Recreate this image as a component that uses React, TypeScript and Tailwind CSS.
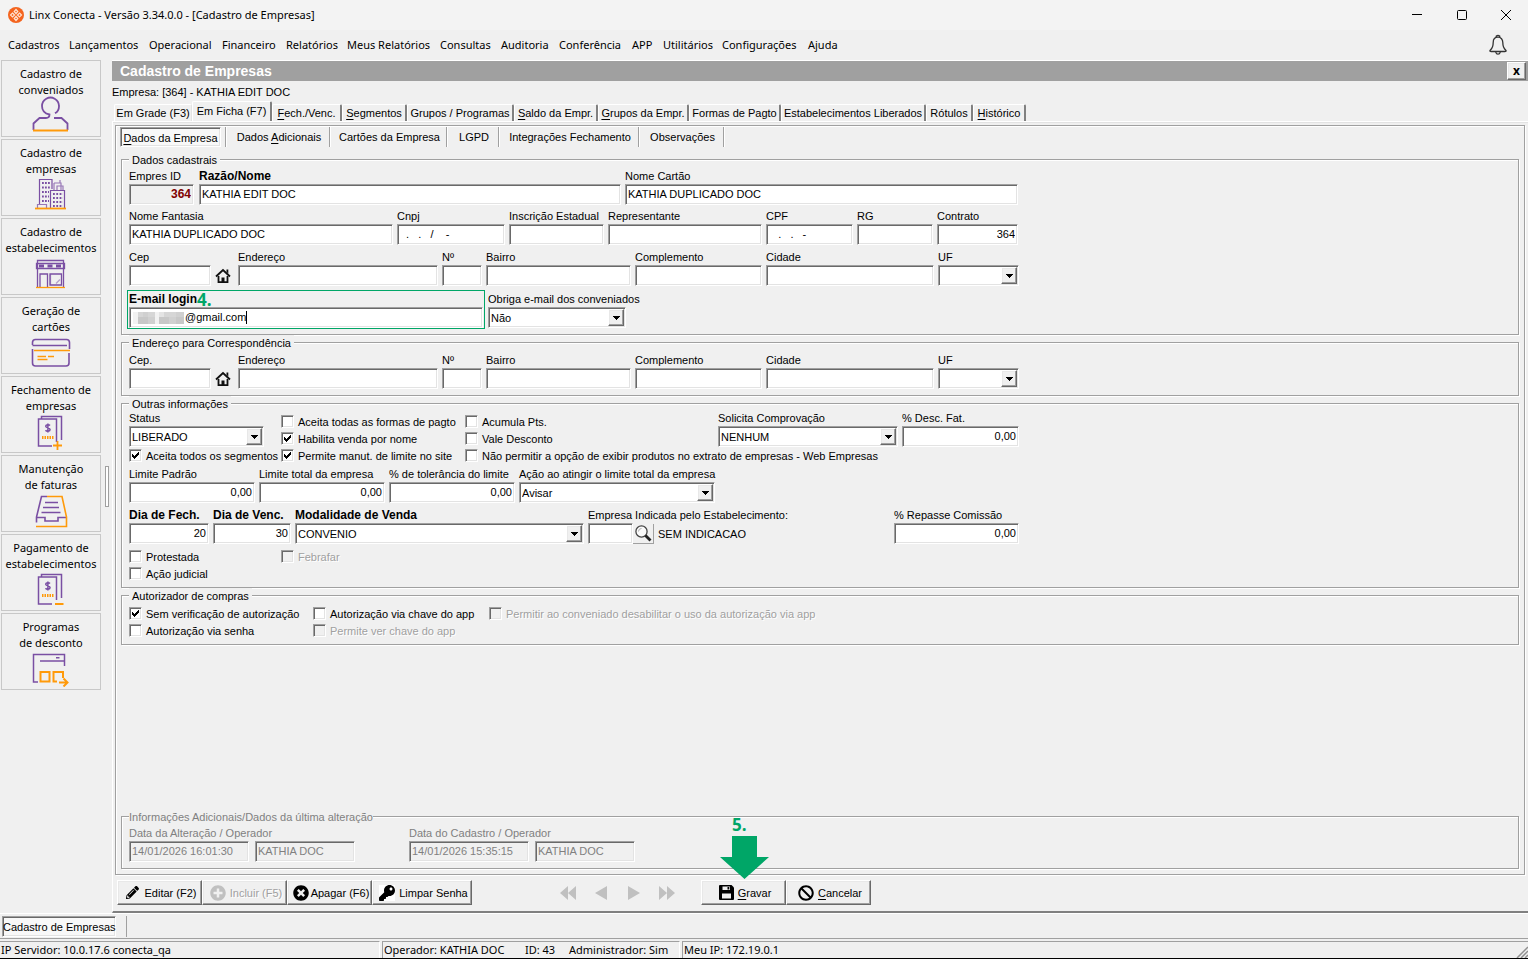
import React, { useId } from "react";
import { FaPencilAlt, FaPlusCircle, FaTimesCircle, FaKey, FaBan } from "react-icons/fa";

const sunken =
  "border border-t-[#a0a0a0] border-l-[#a0a0a0] border-b-white border-r-white shadow-[inset_1px_1px_0_#696969,inset_-1px_-1px_0_#e3e3e3]";
const raised =
  "border border-t-white border-l-white border-b-[#696969] border-r-[#696969] shadow-[inset_-1px_-1px_0_#a0a0a0,inset_1px_1px_0_#e8e8e8]";

const PURPLE = "#7a4fa3";
const ORANGE = "#ff9a0a";

/* ---------- form pieces ---------- */

type FieldProps = {
  label: string;
  w: string;
  value?: string;
  right?: boolean;
  bold?: boolean;
  disabled?: boolean;
  inputClass?: string;
};

function FieldLabel({ id, bold, children }: { id: string; bold?: boolean; children: React.ReactNode }) {
  return (
    <label
      htmlFor={id}
      className={`block h-[15px] whitespace-nowrap leading-[14px] ${bold ? "text-[12px] font-bold" : ""}`}
    >
      {children}
    </label>
  );
}

function Field({ label, w, value = "", right, bold, disabled, inputClass = "bg-white" }: FieldProps) {
  const id = useId();
  return (
    <div className={`shrink-0 ${w}`}>
      <FieldLabel id={id} bold={bold}>
        {label}
      </FieldLabel>
      <input
        id={id}
        type="text"
        defaultValue={value}
        disabled={disabled}
        className={`block h-[21px] w-full px-[2px] pb-px outline-none ${sunken} ${right ? "text-right" : ""} ${inputClass}`}
      />
    </div>
  );
}

function SelectField({ label, w, value = "", bold }: FieldProps) {
  const id = useId();
  return (
    <div className={`shrink-0 ${w}`}>
      <FieldLabel id={id} bold={bold}>
        {label}
      </FieldLabel>
      <div className="relative">
        <select
          id={id}
          defaultValue={value}
          className={`block h-[21px] w-full appearance-none bg-white pl-[2px] pr-5 outline-none ${sunken}`}
        >
          <option value={value}>{value}</option>
        </select>
        <span
          className={`pointer-events-none absolute inset-y-[2px] right-[2px] flex w-4 items-center justify-center bg-[#f0f0f0] ${raised}`}
        >
          <svg width="7" height="4" viewBox="0 0 7 4" shapeRendering="crispEdges">
            <path d="M0 0h7v1h-1v1h-1v1h-1v1h-1v-1h-1v-1h-1v-1h-1z" fill="#000" />
          </svg>
        </span>
      </div>
    </div>
  );
}

function Check({
  label,
  checked,
  disabled,
  w = "",
}: {
  label: string;
  checked?: boolean;
  disabled?: boolean;
  w?: string;
}) {
  return (
    <label className={`flex h-[17px] shrink-0 items-center gap-1 whitespace-nowrap ${w}`}>
      <span className="grid place-items-center">
        <input
          type="checkbox"
          defaultChecked={checked}
          disabled={disabled}
          className={`peer col-start-1 row-start-1 size-[13px] appearance-none bg-white disabled:bg-[#f0f0f0] ${sunken}`}
        />
        <svg
          className="pointer-events-none invisible col-start-1 row-start-1 peer-checked:visible"
          width="7"
          height="7"
          viewBox="0 0 7 7"
          shapeRendering="crispEdges"
        >
          <path d="M0 2h1v1h1v1h1v-1h1v-1h1v-1h1v-1h1v3h-1v1h-1v1h-1v1h-1v1h-1v-1h-1v-1h-1z" fill="#000" />
        </svg>
      </span>
      <span className={disabled ? "text-[#a0a0a0] [text-shadow:1px_1px_0_#fff]" : ""}>{label}</span>
    </label>
  );
}

function Group({
  title,
  className,
  legendClass = "px-[3px]",
  children,
}: {
  title: string;
  className: string;
  legendClass?: string;
  children: React.ReactNode;
}) {
  return (
    <fieldset
      className={`min-w-0 border border-[#a0a0a0] pl-[7px] shadow-[1px_1px_0_#fff,inset_1px_1px_0_#fff] ${className}`}
    >
      <legend className={`bg-[#f0f0f0] pt-[2px] leading-[13px] ${legendClass}`}>{title}</legend>
      {children}
    </fieldset>
  );
}

function HomeIcon() {
  return (
    <button type="button" aria-label="Buscar CEP" className="flex h-[21px] w-6 shrink-0 items-center justify-center">
      <svg width="16" height="16" viewBox="0 0 16 16">
        <path d="M1 8.500 8 2l7 6.500" fill="none" stroke="#111" strokeWidth="1.800" />
        <path d="M3.500 8v6.200h9V8" fill="none" stroke="#111" strokeWidth="1.800" />
        <path d="M11.500 1.500h1.800v4l-1.800-1.600z" fill="#111" />
        <path d="M6.500 9.500h3v5h-3z" fill="#111" />
      </svg>
    </button>
  );
}

function AddressRow({ cep }: { cep: string }) {
  return (
    <div className="flex items-end">
      <Field label={cep} w="w-[82px]" />
      <HomeIcon />
      <div className="ml-[3px] flex gap-1">
        <Field label="Endereço" w="w-[200px]" />
        <Field label="Nº" w="w-[40px]" />
        <Field label="Bairro" w="w-[145px]" />
        <Field label="Complemento" w="w-[127px]" />
        <Field label="Cidade" w="w-[168px]" />
        <SelectField label="UF" w="w-[81px]" />
      </div>
    </div>
  );
}

/* ---------- sidebar ---------- */

function Invoice({ sign }: { sign: "plus" | "minus" }) {
  return (
    <g fill="none" strokeWidth="1.500">
      <path d="M11.500 7V4.500H31.500V28" stroke={PURPLE} />
      <path d="M22 34H8.500V7H26.500V30" stroke={PURPLE} />
      <path d="M20 13.500c-1-1.200-4.300-1-4.300.8 0 2 4.400 1.200 4.400 3.300 0 2-3.500 2.100-4.600.7M17.900 11.500v9" stroke={PURPLE} />
      <path d="M12 25.500h12" stroke={ORANGE} strokeWidth="3" strokeDasharray="1.500 1" />
      {sign === "plus" ? (
        <path d="M23 33.500h9M27.500 29v9" stroke={ORANGE} strokeWidth="1.800" />
      ) : (
        <path d="M25 34h8.500" stroke={ORANGE} strokeWidth="2" />
      )}
    </g>
  );
}

const icons: Record<string, React.ReactNode> = {
  user: (
    <g fill="none" stroke={PURPLE} strokeWidth="1.800">
      <path d="M3.500 34v-6.500L9.500 22H16q3.500 0 3.500-3.500Q12 17 12 10a8.500 8.500 0 1 1 13 7.300" />
      <path d="M24 22h7.500l6 5.500V34" />
      <path d="M3 34.500h35" stroke={ORANGE} />
    </g>
  ),
  buildings: (
    <g fill="none" stroke={PURPLE} strokeWidth="1.200">
      <path d="M9.500 29V4.500H22V14M20.500 33V15.500H34.500V33" />
      <path d="M24 8h7v7M30 5v3M24 8v7M7.500 33v-3.500h9V33M27 15v-4h6v4" opacity=".75" />
      <path d="M12 8h8M12 12.500h8M12 17h7M12 21.500h7M12 26h7" strokeWidth="1.800" strokeDasharray="1.800 1.200" />
      <path d="M23 19h10M23 23h10M23 27h10M23 31h10" strokeWidth="1.800" strokeDasharray="1.800 1.500" />
      <path d="M5 33.500h31" stroke={ORANGE} strokeWidth="1.800" />
    </g>
  ),
  store: (
    <g fill="none" stroke={PURPLE} strokeWidth="1.300">
      <path d="M7.500 33V6.500h26V33M6.500 14.500h28v-5h-28zM10 33V20h7.500v13M20 20h11.500v11H20z" />
      <path d="M9 12h24" strokeWidth="3" strokeDasharray="5 3.500" />
      <path d="M20.500 20v11M26 29.500l4-4" opacity=".5" />
      <path d="M6 33.500h29" stroke={ORANGE} />
    </g>
  ),
  card: (
    <g fill="none" stroke={PURPLE} strokeWidth="1.600">
      <path d="M2.500 12V9.500q0-3 3-3h31q3 0 3 3V16M2.500 12.500H37M2.500 16v14q0 3 3 3h30.500q3 0 3-3V20" />
      <path d="M4 17.500h36M7.500 23.500h8.500M18 23.500h6M7.500 26.500h10" stroke={ORANGE} />
    </g>
  ),
  invoicePlus: <Invoice sign="plus" />,
  tray: (
    <g fill="none" stroke={PURPLE} strokeWidth="1.600">
      <path d="M17 5.500h-5.500L6.500 26v5.500M15 11.500h13M13 16.500h16M11.500 21.500h19M6 26.500h9V30h13v-3.500h8" />
      <path d="M17 5.500h15L36.500 26v9.500H6" stroke={ORANGE} />
    </g>
  ),
  invoiceMinus: <Invoice sign="minus" />,
  programs: (
    <g fill="none" stroke={PURPLE} strokeWidth="1.500">
      <path d="M34.500 17V5.500H3.500V33H8M10 12h24.500M26 8.700h3.500" />
      <g stroke={ORANGE} strokeWidth="2">
        <path d="M10.500 23h9v9.500h-9zM27 32.500h-3.500V23h9.500v6M29 33.500h8M33.500 29.500l4 4-4 4" />
      </g>
    </g>
  ),
};

const sideItems: [string, string, string][] = [
  ["Cadastro de", "conveniados", "user"],
  ["Cadastro de", "empresas", "buildings"],
  ["Cadastro de", "estabelecimentos", "store"],
  ["Geração de", "cartões", "card"],
  ["Fechamento de", "empresas", "invoicePlus"],
  ["Manutenção", "de faturas", "tray"],
  ["Pagamento de", "estabelecimentos", "invoiceMinus"],
  ["Programas", "de desconto", "programs"],
];

function Sidebar() {
  return (
    <nav className="flex w-[101px] shrink-0 flex-col gap-[2px] pl-px">
      {sideItems.map(([a, b, icon]) => (
        <button
          key={a + b}
          type="button"
          className="flex h-[77px] flex-col items-center border border-[#c8c8c8] pt-[5px] font-['Noto_Sans',sans-serif] text-[11px] leading-4"
        >
          <span>{a}</span>
          <span>{b}</span>
          <svg width="42" height="38" viewBox="0 0 42 38" className="-mt-0.5 shrink-0">
            {icons[icon]}
          </svg>
        </button>
      ))}
    </nav>
  );
}

/* ---------- bars ---------- */

const menu: [string, string][] = [
  ["Cadastros", "w-[61px]"],
  ["Lançamentos", "w-[80px]"],
  ["Operacional", "w-[73px]"],
  ["Financeiro", "w-[64px]"],
  ["Relatórios", "w-[61px]"],
  ["Meus Relatórios", "w-[93px]"],
  ["Consultas", "w-[61px]"],
  ["Auditoria", "w-[58px]"],
  ["Conferência", "w-[73px]"],
  ["APP", "w-[31px]"],
  ["Utilitários", "w-[59px]"],
  ["Configurações", "w-[86px]"],
  ["Ajuda", "w-[40px]"],
];

function TitleBar() {
  return (
    <header className="flex h-[30px] items-center bg-[#f3f3f3] pl-2 font-['Noto_Sans',sans-serif] text-[11px]">
      <svg width="16" height="16" viewBox="0 0 16 16">
        <circle cx="8" cy="8" r="8" fill="#f4641e" />
        <g fill="none" stroke="#ffe3d2" strokeWidth="1.200">
          <path d="M8 2.500 9.800 4.500 8 6.500 6.200 4.500zM8 9.500l1.800 2L8 13.500l-1.800-2zM4.500 6l2 2-2 2-2-2zM11.500 6l2 2-2 2-2-2z" />
        </g>
      </svg>
      <h1 className="ml-[5px] whitespace-nowrap">Linx Conecta - Versão 3.34.0.0 - [Cadastro de Empresas]</h1>
      <div className="ml-auto flex h-full">
        <button type="button" aria-label="Minimizar" className="flex w-[45px] items-center justify-center">
          <svg width="10" height="10" viewBox="0 0 10 10" shapeRendering="crispEdges">
            <path d="M0 4h10v1H0z" />
          </svg>
        </button>
        <button type="button" aria-label="Maximizar" className="flex w-[45px] items-center justify-center">
          <svg width="10" height="10" viewBox="0 0 10 10">
            <rect x=".5" y=".5" width="9" height="9" rx="1" fill="none" stroke="#000" />
          </svg>
        </button>
        <button type="button" aria-label="Fechar" className="flex w-[44px] items-center justify-center">
          <svg width="10" height="10" viewBox="0 0 10 10">
            <path d="M0 0l10 10M10 0L0 10" stroke="#000" />
          </svg>
        </button>
      </div>
    </header>
  );
}

function MenuBar() {
  return (
    <div className="flex h-[30px] items-center pl-2 font-['Noto_Sans',sans-serif] text-[11px]">
      {menu.map(([t, w]) => (
        <button key={t} type="button" className={`shrink-0 whitespace-nowrap text-left ${w}`}>
          {t}
        </button>
      ))}
      <button type="button" aria-label="Notificações" className="ml-auto mr-5">
        <svg width="20" height="22" viewBox="0 0 20 22" fill="none" stroke="#333" strokeWidth="1.300">
          <path d="M10 3.200C7 3.200 5.200 5.500 5.200 8.500c0 4.500-1 6-3 7.700-.8.900 0 1.300 1 1.300h13.600c1 0 1.800-.4 1-1.300-2-1.700-3-3.200-3-7.700 0-3-1.800-5.300-4.800-5.300z" />
          <path d="M8.300 3.200V2q1.700-1 3.400 0v1.200M7.900 17.500v1q.3 1.700 2.100 1.700t2.100-1.700v-1" />
        </svg>
      </button>
    </div>
  );
}

/* Renders a caption, underlining its shortcut letter. */
function Hot({ text }: { text: string }) {
  const i = text.indexOf("&");
  if (i < 0) return <span>{text}</span>;
  return (
    <span>
      {text.slice(0, i)}
      <u className="underline-offset-2">{text[i + 1]}</u>
      {text.slice(i + 2)}
    </span>
  );
}

const tabs: [string, string][] = [
  ["Em Grade (F3)", "w-[78px]"],
  ["Em Ficha (F7)", "w-[80px]"],
  ["&Fech./Venc.", "w-[70px]"],
  ["&Segmentos", "w-[65px]"],
  ["Grupos / Programas", "w-[107px]"],
  ["&Saldo da Empr.", "w-[84px]"],
  ["&Grupos da Empr.", "w-[91px]"],
  ["Formas de Pagto", "w-[92px]"],
  ["Estabelecimentos Liberados", "w-[145px]"],
  ["Rótulos", "w-[47px]"],
  ["&Histórico", "w-[53px]"],
];

function OuterTabs() {
  return (
    <div role="tablist" className="flex h-[19px] items-end pl-[2px]">
      {tabs.map(([t, w], i) => (
        <button
          key={t}
          role="tab"
          aria-selected={i === 1}
          type="button"
          className={`flex shrink-0 justify-center whitespace-nowrap rounded-t-[2px] border-l border-t border-white ${w} ${
            i === 1 ? "h-[20px] pt-[2px]" : "h-[17px] pt-px"
          } ${i === 0 ? "border-r border-r-[#e3e3e3]" : "border-r-2 border-r-[#808080]"} leading-[14px]`}
        >
          <Hot text={t} />
        </button>
      ))}
    </div>
  );
}

const innerTabs: [string, string][] = [
  ["Dados &Adicionais", "w-[104px]"],
  ["Cartões da Empresa", "w-[117px]"],
  ["LGPD", "w-[52px]"],
  ["Integrações Fechamento", "w-[140px]"],
  ["Observações", "w-[85px]"],
];

function InnerTabs() {
  return (
    <div role="tablist" className="flex h-[21px] pl-1 pt-px">
      <button
        role="tab"
        aria-selected
        type="button"
        className={`mr-1 w-[101px] shrink-0 whitespace-nowrap bg-[#f8f8f8] pt-[2px] ${sunken}`}
      >
        <Hot text="&Dados da Empresa" />
      </button>
      <span className="w-px shrink-0 bg-[#a0a0a0]" />
      {innerTabs.map(([t, w]) => (
        <button
          key={t}
          role="tab"
          type="button"
          className={`shrink-0 whitespace-nowrap border-r border-[#a0a0a0] pl-[3px] shadow-[1px_0_0_#fff,inset_1px_0_0_#fff] ${w}`}
        >
          <Hot text={t} />
        </button>
      ))}
    </div>
  );
}

/* ---------- groups ---------- */

function DadosCadastrais() {
  const emailId = useId();
  return (
    <Group title="Dados cadastrais" className="pb-[5px] pt-[2px]">
      <div className="flex">
        <Field
          label="Empres ID"
          w="w-[65px]"
          value="364"
          right
          inputClass="bg-[#f0f0f0] text-[12px] font-bold text-[#800000]"
        />
        <div className="ml-[5px] flex gap-1">
          <Field label="Razão/Nome" w="w-[422px]" value="KATHIA EDIT DOC" bold />
          <Field label="Nome Cartão" w="w-[393px]" value="KATHIA DUPLICADO DOC" />
        </div>
      </div>
      <div className="mt-1 flex gap-1">
        <Field label="Nome Fantasia" w="w-[264px]" value="KATHIA DUPLICADO DOC" />
        <Field label="Cnpj" w="w-[108px]" value={"  .   .   /    -"} inputClass="bg-white whitespace-pre" />
        <Field label="Inscrição Estadual" w="w-[95px]" />
        <Field label="Representante" w="w-[154px]" />
        <Field label="CPF" w="w-[87px]" value={"   .   .   -"} inputClass="bg-white whitespace-pre" />
        <Field label="RG" w="w-[76px]" />
        <Field label="Contrato" w="w-[81px]" value="364" right />
      </div>
      <div className="mt-[5px]">
        <AddressRow cep="Cep" />
      </div>
      <div className="mt-1 flex items-end gap-[3px]">
        <div className="relative -ml-[2px] w-[358px] shrink-0 border border-[#00a667] px-px pt-px">
          <FieldLabel id={emailId} bold>
            E-mail login
          </FieldLabel>
          <input
            id={emailId}
            type="email"
            defaultValue="@gmail.com"
            className={`block h-[21px] w-full bg-white pb-px pl-[55px] outline-none ${sunken}`}
          />
          <span className="absolute left-[69px] top-0 font-['Open_Sans',sans-serif] text-[17px] font-bold leading-[18px] text-[#00a667]">
            4.
          </span>
          <svg
            className="absolute bottom-[4px] left-[5px]"
            width="53"
            height="12"
            viewBox="0 0 53 12"
            shapeRendering="crispEdges"
            aria-hidden="true"
          >
            <path d="M0 0h5v12H0zM22 0h4v12h-4z" fill="#f2f2f2" />
            <path d="M5 0h5v5H5zM15 0h7v5h-7zM31 0h12v5H31z" fill="#d6d6d6" />
            <path d="M5 5h10v7H5zM26 5h10v7H26zM43 5h8v7h-8z" fill="#c8c8c8" />
            <path d="M15 5h7v7h-7zM36 5h7v7h-7zM10 0h5v5h-5zM43 0h8v5h-8z" fill="#d0d0d0" />
            <path d="M26 0h5v5h-5z" fill="#e4e4e4" />
          </svg>
          <span className="absolute bottom-[4px] left-[118px] h-[13px] w-px bg-black" />
        </div>
        <div className="pb-px">
          <SelectField label="Obriga e-mail dos conveniados" w="w-[138px]" value="Não" />
        </div>
      </div>
    </Group>
  );
}

function OutrasInformacoes() {
  const id = useId();
  return (
    <Group title="Outras informações" className="pb-[5px] pt-0">
      <div className="flex">
        <div className="w-[152px] shrink-0">
          <SelectField label="Status" w="w-[135px]" value="LIBERADO" />
          <Check label="Aceita todos os segmentos" checked />
        </div>
        <div className="w-[184px] shrink-0 pt-[2px]">
          <Check label="Aceita todas as formas de pagto" />
          <Check label="Habilita venda por nome" checked />
          <Check label="Permite manut. de limite no site" checked />
        </div>
        <div className="w-[253px] shrink-0 pt-[2px]">
          <Check label="Acumula Pts." />
          <Check label="Vale Desconto" />
          <Check label="Não permitir a opção de exibir produtos no extrato de empresas - Web Empresas" />
        </div>
        <div className="flex gap-1">
          <SelectField label="Solicita Comprovação" w="w-[180px]" value="NENHUM" />
          <Field label="% Desc. Fat." w="w-[117px]" value="0,00" right />
        </div>
      </div>
      <div className="mt-[3px] flex gap-1">
        <Field label="Limite Padrão" w="w-[126px]" value="0,00" right />
        <Field label="Limite total da empresa" w="w-[126px]" value="0,00" right />
        <Field label="% de tolerância do limite" w="w-[126px]" value="0,00" right />
        <SelectField label="Ação ao atingir o limite total da empresa" w="w-[196px]" value="Avisar" />
      </div>
      <div className="mt-[5px] flex items-end gap-1">
        <Field label="Dia de Fech." w="w-[80px]" value="20" right bold />
        <Field label="Dia de Venc." w="w-[78px]" value="30" right bold />
        <SelectField label="Modalidade de Venda" w="w-[289px]" value="CONVENIO" bold />
        <div className="w-[302px] shrink-0">
          <FieldLabel id={id}>Empresa Indicada pelo Estabelecimento:</FieldLabel>
          <div className="flex items-center">
            <input
              id={id}
              type="text"
              className={`h-[21px] w-[45px] bg-white px-[2px] outline-none ${sunken}`}
            />
            <button
              type="button"
              aria-label="Pesquisar"
              className="flex h-[20px] w-[21px] items-center justify-center border-b border-r border-[#a0a0a0]"
            >
              <svg width="18" height="18" viewBox="0 0 18 18">
                <circle cx="7.500" cy="7.500" r="5.600" fill="#fafafa" stroke="#444" strokeWidth="1.300" />
                <path d="M4.500 7.500a3 3 0 0 1 3-3" fill="none" stroke="#aaa" />
                <path d="M11.500 11.500l5 5" stroke="#222" strokeWidth="2.800" />
              </svg>
            </button>
            <span className="ml-1">SEM INDICACAO</span>
          </div>
        </div>
        <Field label="% Repasse Comissão" w="w-[125px]" value="0,00" right />
      </div>
      <div className="mt-1 flex">
        <Check label="Protestada" w="w-[152px]" />
        <Check label="Febrafar" disabled />
      </div>
      <Check label="Ação judicial" />
    </Group>
  );
}

function Autorizador() {
  return (
    <Group title="Autorizador de compras" className="pb-[5px] pt-[2px]">
      <div className="flex">
        <Check label="Sem verificação de autorização" checked w="w-[184px]" />
        <Check label="Autorização via chave do app" w="w-[176px]" />
        <Check label="Permitir ao conveniado desabilitar o uso da autorização via app" disabled />
      </div>
      <div className="flex">
        <Check label="Autorização via senha" w="w-[184px]" />
        <Check label="Permite ver chave do app" disabled />
      </div>
    </Group>
  );
}

function UltimaAlteracao() {
  const gray = "bg-[#f0f0f0] text-[#808080]";
  return (
    <Group
      title="Informações Adicionais/Dados da última alteração"
      legendClass="px-0"
      className="mt-auto pb-[6px] pt-[2px] text-[#808080]"
    >
      <div className="flex gap-[6px]">
        <Field label="Data da Alteração / Operador" w="w-[120px]" value="14/01/2026 16:01:30" disabled inputClass={gray} />
        <Field label=" " w="w-[100px]" value="KATHIA DOC" disabled inputClass={gray} />
        <div className="ml-12 flex gap-[6px]">
          <Field label="Data do Cadastro / Operador" w="w-[120px]" value="14/01/2026 15:35:15" disabled inputClass={gray} />
          <Field label=" " w="w-[100px]" value="KATHIA DOC" disabled inputClass={gray} />
        </div>
      </div>
    </Group>
  );
}

/* ---------- footer ---------- */

function ToolButton({
  icon,
  text,
  w,
  disabled,
}: {
  icon: React.ReactNode;
  text: string;
  w: string;
  disabled?: boolean;
}) {
  return (
    <button
      type="button"
      disabled={disabled}
      className={`flex h-[25px] shrink-0 items-center justify-center gap-1 whitespace-nowrap pl-[3px] ${raised} ${w} ${
        disabled ? "text-[#a0a0a0] [text-shadow:1px_1px_0_#fff]" : ""
      }`}
    >
      {icon}
      <Hot text={text} />
    </button>
  );
}

function Nav({ d, label }: { d: string; label: string }) {
  return (
    <button type="button" aria-label={label} className="flex h-[25px] w-[33px] shrink-0 items-center justify-center">
      <svg width="16" height="14" viewBox="0 0 16 14" fill="#c0c0c0">
        <path d={d} />
      </svg>
    </button>
  );
}

function Toolbar() {
  return (
    <div className="mt-[5px] flex pl-[2px]">
      <ToolButton w="w-[85px]" text="Editar (F2)" icon={<FaPencilAlt className="mr-0.5 size-[13px]" />} />
      <ToolButton w="w-[85px]" text="Incluir (F5)" disabled icon={<FaPlusCircle className="size-4 text-[#c0c0c0]" />} />
      <ToolButton w="w-[85px]" text="Apagar (F6)" icon={<FaTimesCircle className="-mr-0.5 size-4" />} />
      <ToolButton
        w="w-[100px]"
        text="Limpar Senha"
        icon={
          <span className="bg-white">
            <FaKey className="size-4" />
          </span>
        }
      />
      <div className="ml-[79px] mr-[18px] flex">
        <Nav label="Primeiro" d="M8 0v14L0 7zM16 0v14L8 7z" />
        <Nav label="Anterior" d="M14 0v14L2 7z" />
        <Nav label="Próximo" d="M2 0v14l12-7z" />
        <Nav label="Último" d="M0 0v14l8-7zM8 0v14l8-7z" />
      </div>
      <div className="relative">
        <ToolButton
          w="w-[85px]"
          text="&Gravar"
          icon={
            <svg width="15" height="15" viewBox="0 0 15 15">
              <path d="M0 1q0-1 1-1h11.500L15 2.500V14q0 1-1 1H1q-1 0-1-1z" fill="#000" />
              <path d="M3.500 1.500h7.500V5H3.500zM3 8.500h9v5H3z" fill="#f0f0f0" />
              <path d="M8.500 2h1.800v2.500H8.500z" fill="#000" />
            </svg>
          }
        />
        <div className="pointer-events-none absolute bottom-[26px] left-[19px] flex w-[49px] flex-col">
          <span className="pl-3 font-['Open_Sans',sans-serif] text-[17px] font-bold leading-[22px] text-[#00a667]">5.</span>
          <svg width="49" height="43" viewBox="0 0 49 43">
            <path d="M12 0h25v21h12L24.500 43 0 21h12z" fill="#00a667" />
          </svg>
        </div>
      </div>
      <ToolButton w="w-[85px]" text="&Cancelar" icon={<FaBan className="size-4" />} />
    </div>
  );
}

function StatusBar() {
  const cell = "border-l border-t border-[#a0a0a0] pl-px";
  return (
    <footer className="flex h-[20px] gap-[2px] whitespace-nowrap border-b border-black pt-[2px] font-['Noto_Sans',sans-serif] text-[11px] leading-4">
      <span className={`w-[380px] ${cell} border-l-0 border-r border-r-white`}>IP Servidor: 10.0.17.6 conecta_qa</span>
      <span className={`flex w-[298px] border-r border-r-white ${cell}`}>
        <span className="w-[141px]">Operador: KATHIA DOC</span>
        <span className="w-[44px]">ID: 43</span>
        <span>Administrador: Sim</span>
      </span>
      <span className={`flex flex-1 items-end justify-between ${cell}`}>
        Meu IP: 172.19.0.1
        <svg width="12" height="12" viewBox="0 0 12 12" stroke="#909090" strokeWidth="1.500">
          <path d="M1 12 12 1M5 12l7-7M9 12l3-3" />
        </svg>
      </span>
    </footer>
  );
}

export default function App() {
  return (
    <div className="flex min-h-screen flex-col overflow-hidden bg-[#f0f0f0] font-['Liberation_Sans',Arial,sans-serif] text-[11px] leading-[14px] text-black">
      <TitleBar />
      <MenuBar />
      <div className="flex flex-1">
        <Sidebar />
        <div className="flex w-[11px] shrink-0 items-center pl-1">
          <span className="h-[41px] w-1 border border-[#a0a0a0] bg-white" />
        </div>
        <main className="flex min-w-0 flex-1 flex-col border-t border-white">
          <div className="flex h-[20px] items-center justify-between bg-[#a0a0a0] pl-2 pr-[2px]">
            <h2 className="text-[14px] font-bold text-white">Cadastro de Empresas</h2>
            <button
              type="button"
              className={`h-[18px] w-[19px] bg-[#f0f0f0] font-['Noto_Sans',sans-serif] text-[12px] font-bold leading-[14px] ${raised}`}
            >
              x
            </button>
          </div>
          <p className="mb-[3px] mt-1 leading-[14px]">Empresa: [364] - KATHIA EDIT DOC</p>
          <OuterTabs />
          <div className="flex flex-1 flex-col border-b-2 border-l border-t border-b-[#808080] border-l-white border-t-white pb-[6px] pl-[2px] pr-[3px] pt-[3px] shadow-[inset_0_1px_0_#e3e3e3]">
            <div className="flex flex-1 flex-col border border-[#a0a0a0] shadow-[1px_1px_0_#fff,inset_1px_1px_0_#fff]">
              <InnerTabs />
              <div className="mt-[5px] flex flex-1 flex-col px-[5px] pb-[5px]">
                <DadosCadastrais />
                <Group title="Endereço para Correspondência" className="pb-[6px] pt-[3px]">
                  <AddressRow cep="Cep." />
                </Group>
                <OutrasInformacoes />
                <Autorizador />
                <UltimaAlteracao />
              </div>
            </div>
            <Toolbar />
          </div>
        </main>
      </div>
      <div className="flex h-[26px] items-stretch border-b border-[#a0a0a0] border-t border-t-white pb-px pl-[2px] pt-[2px]">
        <button type="button" className={`w-[114px] whitespace-nowrap bg-[#f8f8f8] ${sunken}`}>
          Cadastro de Empresas
        </button>
        <span className="ml-[10px] w-px bg-[#a0a0a0]" />
      </div>
      <StatusBar />
    </div>
  );
}
